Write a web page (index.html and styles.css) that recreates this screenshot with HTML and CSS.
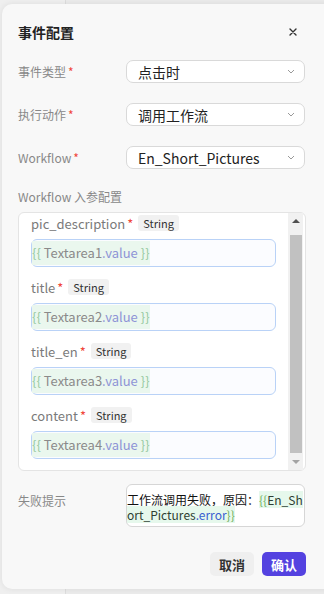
FILE: index.html
```html
<!DOCTYPE html>
<html lang="zh-CN">
<head>
    <meta charset="UTF-8">
    <meta name="viewport" content="width=device-width, initial-scale=1.0">
    <title>事件配置</title>
    <link rel="stylesheet" href="styles.css">
</head>
<body>
    <div class="modal">
        <!-- Header -->
        <div class="modal-header">
            <h2>事件配置</h2>
            <span class="close">
                <svg width="8" height="8" viewBox="0 0 8 8"><path d="M1 1L7 7M7 1L1 7" stroke="#333" stroke-width="1.4" stroke-linecap="round"/></svg>
            </span>
        </div>

        <!-- Event fields -->
        <div class="form-row">
            <label>事件类型<i>*</i></label>
            <div class="select">点击时<svg width="8" height="5" viewBox="0 0 8 5"><path d="M1 1L4 4L7 1" fill="none" stroke="#999" stroke-width="1"/></svg></div>
        </div>
        <div class="form-row">
            <label>执行动作<i>*</i></label>
            <div class="select">调用工作流<svg width="8" height="5" viewBox="0 0 8 5"><path d="M1 1L4 4L7 1" fill="none" stroke="#999" stroke-width="1"/></svg></div>
        </div>
        <div class="form-row">
            <label>Workflow<i>*</i></label>
            <div class="select">En_Short_Pictures<svg width="8" height="5" viewBox="0 0 8 5"><path d="M1 1L4 4L7 1" fill="none" stroke="#999" stroke-width="1"/></svg></div>
        </div>

        <!-- Workflow params -->
        <div class="section-label">Workflow 入参配置</div>
        <div class="params">
            <div class="params-list">
                <div class="param">
                    <div class="param-name">pic_description<i>*</i><span class="tag">String</span></div>
                    <div class="expr"><span class="code"><b class="brace">{{</b> Textarea1<b class="prop">.value</b> <b class="brace">}}</b></span></div>
                </div>
                <div class="param">
                    <div class="param-name">title<i>*</i><span class="tag">String</span></div>
                    <div class="expr"><span class="code"><b class="brace">{{</b> Textarea2<b class="prop">.value</b> <b class="brace">}}</b></span></div>
                </div>
                <div class="param">
                    <div class="param-name">title_en<i>*</i><span class="tag">String</span></div>
                    <div class="expr"><span class="code"><b class="brace">{{</b> Textarea3<b class="prop">.value</b> <b class="brace">}}</b></span></div>
                </div>
                <div class="param">
                    <div class="param-name">content<i>*</i><span class="tag">String</span></div>
                    <div class="expr"><span class="code"><b class="brace">{{</b> Textarea4<b class="prop">.value</b> <b class="brace">}}</b></span></div>
                </div>
            </div>
            <div class="scrollbar">
                <span class="arrow up"></span>
                <span class="thumb"></span>
                <span class="arrow down"></span>
            </div>
        </div>

        <!-- Error message -->
        <div class="form-row fail-row">
            <label>失败提示</label>
            <div class="textarea">工作流调用失败，原因：<span class="hl"><b class="brace">{{</b>En_Short_Pictures<b class="err">.error</b><b class="brace">}}</b></span></div>
        </div>

        <!-- Footer -->
        <div class="footer">
            <button class="btn">取消</button>
            <button class="btn primary">确认</button>
        </div>
    </div>
</body>
</html>
```

FILE: styles.css
```css
html, body {
    height: 100%;
    overflow: hidden;
}

body {
    margin: 0;
    padding: 4px 0 0 2px;
    box-sizing: border-box;
    font-family: "Noto Sans CJK SC", "Noto Sans", sans-serif;
    background: linear-gradient(to right, #efefef 0 65px, #dddddd 65px 66px, #ebebeb 66px);
}

.modal {
    width: 340px;
    height: 585px;
    box-sizing: border-box;
    padding: 18px 36px 0 16px;
    background: #f8f8f8;
    border-radius: 10px;
    box-shadow: 0 0 6px rgba(0, 0, 0, 0.08);
}

.modal-header {
    display: flex;
    justify-content: space-between;
    align-items: center;
    height: 20px;
}

.modal-header h2 {
    margin: 0;
    font-size: 14px;
    font-weight: 700;
    color: #222;
    line-height: 20px;
}

.close {
    display: flex;
    margin-right: 9px;
}

.form-row {
    display: flex;
    align-items: center;
    margin-top: 20px;
}

.modal-header + .form-row {
    margin-top: 18px;
}

.form-row label {
    width: 108px;
    flex-shrink: 0;
    font-size: 12px;
    color: #888;
    line-height: 16px;
}

i {
    font-style: normal;
    color: #f0463a;
    margin-left: 2px;
}

.select {
    width: 179px;
    height: 23px;
    box-sizing: border-box;
    display: flex;
    align-items: center;
    justify-content: space-between;
    padding: 0 9px 0 11px;
    border: 1px solid #d9d9d9;
    border-radius: 7px;
    background: #fff;
    font-size: 14px;
    color: #222;
}

.section-label {
    margin-top: 19px;
    margin-bottom: 7px;
    font-size: 12px;
    line-height: 17px;
    color: #888;
}

.params {
    display: flex;
    height: 259px;
    box-sizing: border-box;
    border: 1px solid #e4e4e4;
    border-radius: 6px;
    background: #fff;
}

.params-list {
    flex: 1;
    padding-left: 12px;
}

.param + .param {
    margin-top: 10px;
}

.param-name {
    display: flex;
    align-items: center;
    height: 20px;
    font-size: 13px;
    color: #7a7a7a;
}

.tag {
    margin-left: 5px;
    padding: 0 5px;
    height: 16px;
    line-height: 16px;
    font-size: 11px;
    color: #333;
    background: #f1f1f1;
    border-radius: 3px;
}

.expr {
    margin-top: 6px;
    width: 245px;
    height: 28px;
    box-sizing: border-box;
    padding: 1px 0;
    border: 1px solid #b9d2f7;
    border-radius: 6px;
    background: #fbfcff;
    font-size: 13px;
}

.code {
    display: inline-block;
    line-height: 24px;
    background: #eaf7ee;
    color: #8a8a8a;
}

b {
    font-weight: 400;
}

.code .brace {
    color: #96c9a0;
}

.code .prop {
    color: #8e94d6;
}

.scrollbar {
    width: 15px;
    margin-right: 2px;
    display: flex;
    flex-direction: column;
    background: #f1f1f1;
}

.arrow {
    height: 16px;
    display: flex;
    align-items: center;
    justify-content: center;
}

.arrow::before {
    content: "";
    border-left: 4px solid transparent;
    border-right: 4px solid transparent;
}

.arrow.up::before {
    border-bottom: 4px solid #505050;
}

.arrow.down::before {
    border-top: 4px solid #a3a3a3;
}

.thumb {
    flex: 1;
    margin: 6px 1px 1px 2px;
    background: #c1c1c1;
}

.fail-row {
    margin-top: 13px;
    align-items: flex-start;
}

.fail-row label {
    padding-top: 9px;
}

.textarea {
    width: 179px;
    height: 43px;
    box-sizing: border-box;
    padding: 7px 0 0 0;
    border: 1px solid #d6d6d6;
    border-radius: 6px;
    background: #fff;
    font-size: 12px;
    line-height: 15px;
    color: #111;
    word-break: break-all;
}

.hl {
    background: #e6f8ec;
    color: #2f3f33;
}

.hl .brace {
    color: #6fb05a;
}

.hl .err {
    color: #3a5fd0;
}

.footer {
    display: flex;
    justify-content: flex-end;
    gap: 8px;
    margin-top: 25px;
}

.btn {
    width: 44px;
    height: 24px;
    padding: 0;
    border: none;
    border-radius: 5px;
    background: #efefef;
    color: #333;
    font-family: inherit;
    font-size: 13px;
    font-weight: 700;
    cursor: pointer;
}

.btn.primary {
    background: #5442e0;
    color: #fff;
}
```
